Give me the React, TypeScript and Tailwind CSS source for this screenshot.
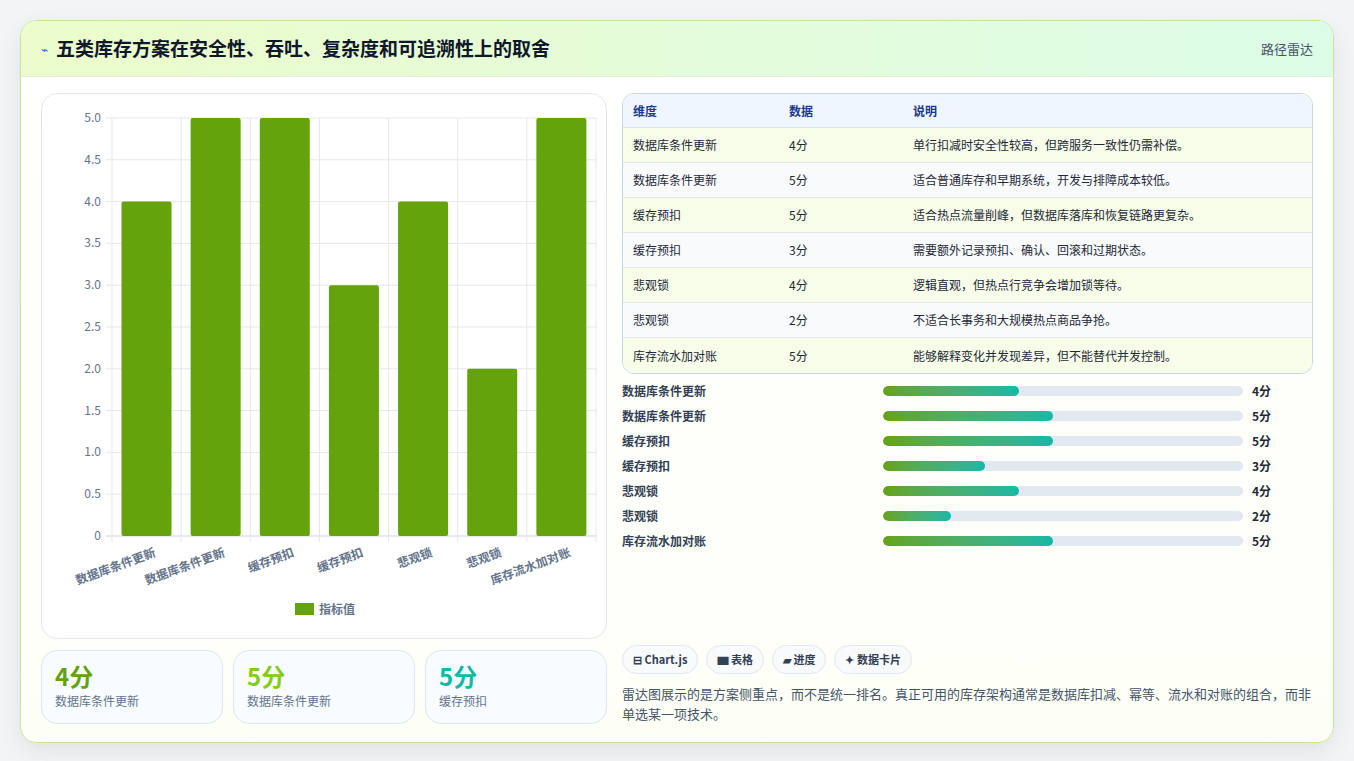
const font = { fontFamily: '"Noto Sans CJK SC", "Noto Sans", sans-serif' };

const rows = [
  { name: "数据库条件更新", score: 4, note: "单行扣减时安全性较高，但跨服务一致性仍需补偿。" },
  { name: "数据库条件更新", score: 5, note: "适合普通库存和早期系统，开发与排障成本较低。" },
  { name: "缓存预扣", score: 5, note: "适合热点流量削峰，但数据库落库和恢复链路更复杂。" },
  { name: "缓存预扣", score: 3, note: "需要额外记录预扣、确认、回滚和过期状态。" },
  { name: "悲观锁", score: 4, note: "逻辑直观，但热点行竞争会增加锁等待。" },
  { name: "悲观锁", score: 2, note: "不适合长事务和大规模热点商品争抢。" },
  { name: "库存流水加对账", score: 5, note: "能够解释变化并发现差异，但不能替代并发控制。" },
];

function Chart() {
  const L = 70, R = 554, T = 24, B = 442;
  const unit = (B - T) / 5;
  const cw = (R - L) / 7;
  return (
    <svg width="566" height="544" className="block">
      {Array.from({ length: 11 }).map((_, i) => {
        const v = i * 0.5;
        const y = B - v * unit;
        return (
          <g key={i}>
            <line x1={L - 6} x2={R} y1={y} y2={y} stroke={i === 0 ? "#cbd5e1" : "#e5e7eb"} />
            <text x={L - 11} y={y + 4} textAnchor="end" fontSize="12" fill="#64748b">
              {i === 0 ? "0" : v.toFixed(1)}
            </text>
          </g>
        );
      })}
      {Array.from({ length: 8 }).map((_, i) => (
        <line key={i} x1={L + i * cw} x2={L + i * cw} y1={T} y2={B + 6} stroke="#e5e7eb" />
      ))}
      {rows.map((r, i) => {
        const x = L + i * cw + 9.5;
        const h = r.score * unit;
        return (
          <g key={i}>
            <rect x={x} y={B - h} width={50} height={h} rx={2} fill="#65a30d" />
            <text
              x={L + i * cw + cw / 2 + 10}
              y={B + 20}
              textAnchor="end"
              fontSize="12"
              fontWeight="700"
              fill="#64748b"
              transform={`rotate(-20 ${L + i * cw + cw / 2 + 10} ${B + 20})`}
            >
              {r.name}
            </text>
          </g>
        );
      })}
      <rect x={253} y={509} width={19} height={12} fill="#65a30d" />
      <text x={277} y={520} fontSize="12" fontWeight="700" fill="#64748b">指标值</text>
    </svg>
  );
}

export default function App() {
  return (
    <div className="min-h-[761px] bg-[#f3f4f6] p-5" style={font}>
      <div className="rounded-2xl border border-[#c5e79a] bg-gradient-to-b from-white to-[#fdfff7] shadow-[0_8px_24px_rgba(0,0,0,0.08)] overflow-hidden">
        <div className="h-[56px] flex items-center justify-between px-5 border-b border-[#e2efd6] bg-gradient-to-r from-[#ecfccb] to-[#dcfce7]">
          <div className="flex items-center gap-2">
            <span className="text-[#2563eb] text-xs">⌁</span>
            <h1 className="text-[19px] font-bold text-[#0f172a]">五类库存方案在安全性、吞吐、复杂度和可追溯性上的取舍</h1>
          </div>
          <span className="text-[13px] text-[#475569]">路径雷达</span>
        </div>
        <div className="flex gap-[15px] px-5 pt-4 pb-[18px]">
          <div className="w-[566px] flex flex-col gap-[11px]">
            <div className="rounded-2xl border border-[#e2e8f0] bg-white">
              <Chart />
            </div>
            <div className="grid grid-cols-3 gap-[10px]">
              {[
                { v: "4分", l: "数据库条件更新", c: "text-[#65a30d]" },
                { v: "5分", l: "数据库条件更新", c: "text-[#84cc16]" },
                { v: "5分", l: "缓存预扣", c: "text-[#14b8a6]" },
              ].map((s, i) => (
                <div key={i} className="h-[74px] rounded-2xl border border-[#dbe7f3] bg-[#f8fbff] px-[13px] pt-[10px]">
                  <div className={`text-[24px] font-bold leading-[30px] ${s.c}`}>{s.v}</div>
                  <div className="text-xs text-[#64748b] mt-[2px]">{s.l}</div>
                </div>
              ))}
            </div>
          </div>
          <div className="flex-1 flex flex-col">
            <div className="rounded-xl border border-[#cbd5e1] overflow-hidden">
              <div className="flex h-[34px] items-center bg-[#eff6ff] border-b border-[#dbe3ef] text-xs font-bold text-[#1e3a8a]">
                <div className="w-[166px] pl-[10px]">维度</div>
                <div className="w-[124px]">数据</div>
                <div>说明</div>
              </div>
              {rows.map((r, i) => (
                <div key={i} className={`flex h-[35px] items-center text-xs text-[#1f2937] ${i < 6 ? "border-b border-[#e2e8f0]" : ""} ${i % 2 === 0 ? "bg-[#f7fde9]" : "bg-[#f8fafc]"}`}>
                  <div className="w-[166px] pl-[10px]">{r.name}</div>
                  <div className="w-[124px]">{r.score}分</div>
                  <div>{r.note}</div>
                </div>
              ))}
            </div>
            <div className="flex flex-col mt-[8px] gap-[7px]">
              {rows.map((r, i) => (
                <div key={i} className="flex items-center h-[18px]">
                  <div className="w-[261px] text-xs font-bold text-[#334155]">{r.name}</div>
                  <div className="w-[360px] h-[10px] rounded-full bg-[#e2e8f0] overflow-hidden">
                    <div className="h-full rounded-full bg-gradient-to-r from-[#65a30d] to-[#14b8a6]" style={{ width: `${r.score * 34}px` }} />
                  </div>
                  <div className="ml-[9px] text-xs font-bold text-[#1f2937]">{r.score}分</div>
                </div>
              ))}
            </div>
            <div className="mt-auto flex gap-[8px]">
              {["⊟ Chart.js", "▆ 表格", "▰ 进度", "✦ 数据卡片"].map((t) => (
                <span key={t} className="h-[29px] px-[10px] flex items-center rounded-full border border-[#e2e8f0] bg-[#f8fafc] text-[11px] font-bold text-[#334155]">{t}</span>
              ))}
            </div>
            <p className="mt-[10px] text-[13px] leading-[20px] text-[#475569]">
              雷达图展示的是方案侧重点，而不是统一排名。真正可用的库存架构通常是数据库扣减、幂等、流水和对账的组合，而非单选某一项技术。
            </p>
          </div>
        </div>
      </div>
    </div>
  );
}
